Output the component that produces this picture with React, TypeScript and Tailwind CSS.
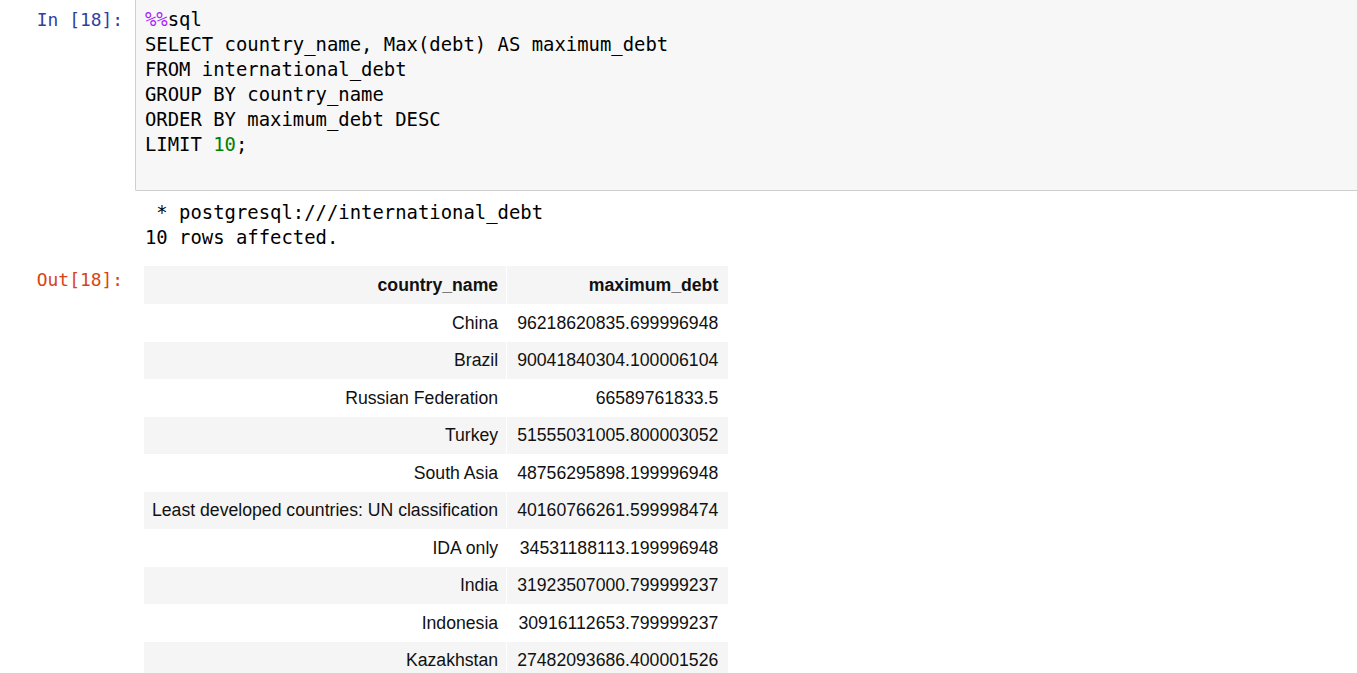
const mono = "font-['DejaVu_Sans_Mono','Liberation_Mono',monospace]";

const rows: [string, string][] = [
  ["China", "96218620835.699996948"],
  ["Brazil", "90041840304.100006104"],
  ["Russian Federation", "66589761833.5"],
  ["Turkey", "51555031005.800003052"],
  ["South Asia", "48756295898.199996948"],
  ["Least developed countries: UN classification", "40160766261.599998474"],
  ["IDA only", "34531188113.199996948"],
  ["India", "31923507000.799999237"],
  ["Indonesia", "30916112653.799999237"],
  ["Kazakhstan", "27482093686.400001526"],
];

const codeLines = [
  "SELECT country_name, Max(debt) AS maximum_debt",
  "FROM international_debt",
  "GROUP BY country_name",
  "ORDER BY maximum_debt DESC",
];

export default function App() {
  return (
    <div className="h-[673px] w-[1357px] overflow-hidden bg-white">
      {/* input cell */}
      <div className="flex">
        <div
          className={`${mono} w-[135px] shrink-0 pr-[12px] pt-[7px] text-right text-[17.9px] leading-[25px] text-[#303F9F]`}
        >
          In&nbsp;[18]:
        </div>
        <div className="min-w-0 flex-1 rounded-bl-[2px] border-b border-l border-[#cfcfcf] bg-[#f7f7f7] pb-[33px] pl-[9px] pt-[7px]">
          <pre className={`${mono} whitespace-pre text-[18.9px] leading-[25px] text-black`}>
            <div>
              <span className="text-[#AA22FF]">%%</span>sql
            </div>
            {codeLines.map((line) => (
              <div key={line}>{line}</div>
            ))}
            <div>
              LIMIT <span className="text-[#008000]">10</span>;
            </div>
          </pre>
        </div>
      </div>

      {/* stream output */}
      <div className="mt-[9px] flex">
        <div className="w-[135px] shrink-0" />
        <pre
          className={`${mono} whitespace-pre pl-[10px] text-[18.9px] leading-[25px] text-black`}
        >
          {" * postgresql:///international_debt\n10 rows affected."}
        </pre>
      </div>

      {/* result output */}
      <div className="mt-[16px] flex">
        <div
          className={`${mono} w-[135px] shrink-0 pr-[12px] pt-[1px] text-right text-[17.9px] leading-[25px] text-[#D84315]`}
        >
          Out[18]:
        </div>
        <div className="pl-[9px]">
          <table className="border-collapse font-['Liberation_Sans',Arial,sans-serif] text-[17.65px] text-[#111]">
            <thead>
              <tr className="h-[38px] bg-[#f5f5f5]">
                <th className="border-r border-white px-[8px] text-right font-bold">
                  country_name
                </th>
                <th className="px-[10px] text-right font-bold">maximum_debt</th>
              </tr>
            </thead>
            <tbody>
              {rows.map(([name, debt], i) => (
                <tr
                  key={name}
                  className={i % 2 === 1 ? "h-[37.5px] bg-[#f5f5f5]" : "h-[37.5px] bg-white"}
                >
                  <td className="border-r border-white px-[8px] text-right">{name}</td>
                  <td className="px-[10px] text-right">{debt}</td>
                </tr>
              ))}
            </tbody>
          </table>
        </div>
      </div>
    </div>
  );
}
